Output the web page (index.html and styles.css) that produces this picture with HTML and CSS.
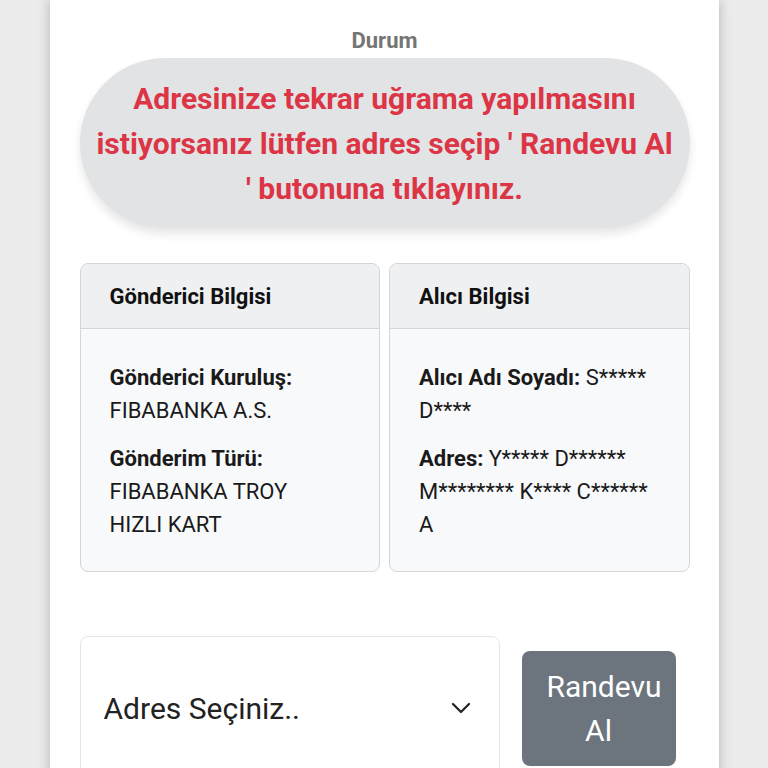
FILE: index.html
```html
<!DOCTYPE html>
<html lang="tr">
<head>
    <meta charset="UTF-8">
    <meta name="viewport" content="width=device-width, initial-scale=1.0">
    <title>Gönderi Durumu</title>
    <link rel="stylesheet" href="styles.css">
</head>
<body>
    <div class="container">
        <div class="status-title">Durum</div>
        <div class="status-pill">
            Adresinize tekrar uğrama yapılmasını istiyorsanız lütfen adres seçip ' Randevu Al ' butonuna tıklayınız.
        </div>

        <div class="info-row">
            <div class="info-card">
                <div class="info-header">Gönderici Bilgisi</div>
                <div class="info-body">
                    <p><b>Gönderici Kuruluş:</b><br>FIBABANKA A.S.</p>
                    <p><b>Gönderim Türü:</b><br>FIBABANKA TROY HIZLI KART</p>
                </div>
            </div>
            <div class="info-card">
                <div class="info-header">Alıcı Bilgisi</div>
                <div class="info-body">
                    <p><b>Alıcı Adı Soyadı:</b> S***** D****</p>
                    <p><b>Adres:</b> Y***** D****** M******** K**** C****** A</p>
                </div>
            </div>
        </div>

        <div class="appointment-row">
            <div class="address-select">
                <span>Adres Seçiniz..</span>
                <svg class="chevron" width="20" height="12" viewBox="0 0 20 12">
                    <path d="M2 2 L10 10 L18 2" fill="none" stroke="#222" stroke-width="2.2" stroke-linecap="round" stroke-linejoin="round"/>
                </svg>
            </div>
            <button class="btn-appointment">Randevu Al</button>
        </div>
    </div>
</body>
</html>
```

FILE: styles.css
```css
body {
    font-family: Roboto, "Noto Sans", Arial, sans-serif;
    background-color: #ececec;
    margin: 0;
    padding: 0;
}
.container {
    width: 610px;
    margin: 0 auto;
    padding: 27px 29px 0 30px;
    min-height: 768px;
    background: #fff;
    box-shadow: 0 0 12px rgba(0, 0, 0, 0.25);
    box-sizing: content-box;
}
.status-title {
    text-align: center;
    font-weight: bold;
    font-size: 22px;
    color: #757575;
    line-height: 28px;
}
.status-pill {
    margin-top: 3px;
    height: 170px;
    box-sizing: border-box;
    padding: 0 14px;
    display: flex;
    align-items: center;
    justify-content: center;
    text-align: center;
    background: #e2e3e5;
    border-radius: 85px;
    box-shadow: 0 6px 10px rgba(0, 0, 0, 0.1);
    color: #dc3545;
    font-weight: bold;
    font-size: 30px;
    line-height: 45px;
}
.info-row {
    display: grid;
    grid-template-columns: 1fr 1fr;
    gap: 9px;
    margin-top: 35px;
}
.info-card {
    border: 1px solid #d3d5d8;
    border-radius: 8px;
    background: #f8f9fa;
    overflow: hidden;
    height: 309px;
    box-sizing: border-box;
}
.info-header {
    background: #eff0f2;
    border-bottom: 1px solid #d3d5d8;
    height: 65px;
    box-sizing: border-box;
    padding: 0 29px;
    display: flex;
    align-items: center;
    font-weight: bold;
    font-size: 22px;
    color: #111;
}
.info-body {
    padding: 32px 37px 0 29px;
    font-size: 22px;
    line-height: 33px;
    color: #1a1a1a;
}
.info-body p {
    margin: 0 0 15px;
}
.appointment-row {
    display: flex;
    align-items: flex-start;
    margin-top: 64px;
}
.address-select {
    width: 420px;
    height: 150px;
    box-sizing: border-box;
    border: 1px solid #e6e6e6;
    border-radius: 8px;
    display: flex;
    align-items: center;
    justify-content: space-between;
    padding: 0 28px 6px 23px;
    font-size: 30px;
    color: #222;
}
.btn-appointment {
    margin-left: 22px;
    margin-top: 15px;
    width: 154px;
    height: 115px;
    border: none;
    border-radius: 8px;
    background-color: #6c757d;
    color: #fff;
    font-family: Roboto, "Noto Sans", Arial, sans-serif;
    font-size: 30px;
    line-height: 44px;
    padding: 0 25px;
}
```
